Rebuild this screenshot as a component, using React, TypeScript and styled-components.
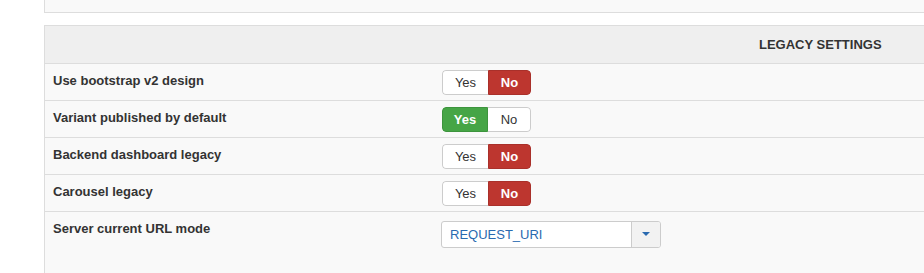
import React from 'react'
import styled, { createGlobalStyle } from 'styled-components'

const GlobalStyle = createGlobalStyle`
  html, body {
    margin: 0;
    padding: 0;
    background: #ffffff;
    overflow: hidden;
  }
  body {
    font-family: "Liberation Sans", Arial, sans-serif;
    font-size: 13px;
    color: #333333;
  }
`

const Page = styled.div`
  padding-left: 44px;
`

const TopPanel = styled.div`
  height: 13px;
  box-sizing: border-box;
  background: #f9f9f9;
  border-left: 1px solid #dddddd;
  border-bottom: 1px solid #dddddd;
`

const Panel = styled.div`
  margin-top: 12px;
  background: #f9f9f9;
  border: 1px solid #dddddd;
  border-right: none;
  min-height: 248px;
`

const PanelHeader = styled.div`
  height: 37px;
  background: #efefef;
  border-bottom: 1px solid #dddddd;
  display: flex;
  align-items: center;
  padding-left: 714px;
  font-weight: bold;
  text-transform: uppercase;
  color: #333333;
`

const Row = styled.div<{ $last?: boolean }>`
  display: flex;
  align-items: ${p => (p.$last ? 'flex-start' : 'center')};
  height: ${p => (p.$last ? 'auto' : '36px')};
  padding-top: ${p => (p.$last ? '8px' : '0')};
  border-bottom: ${p => (p.$last ? 'none' : '1px solid #dddddd')};
`

const Label = styled.div<{ $last?: boolean }>`
  width: 389px;
  padding-left: 8px;
  font-weight: bold;
  color: #333333;
  padding-top: ${p => (p.$last ? '4px' : '0')};
  margin-top: -3px;
`

const Toggle = styled.div`
  display: flex;
  height: 25px;
  border-radius: 4px;
  overflow: hidden;
  margin-top: 1px;
`

const ToggleButton = styled.div<{ $tone: 'off' | 'red' | 'green'; $side: 'left' | 'right' }>`
  display: flex;
  align-items: center;
  justify-content: center;
  box-sizing: border-box;
  width: ${p => (p.$side === 'left' ? '46px' : '43px')};
  font-size: 13px;
  background: ${p => (p.$tone === 'red' ? '#bd362f' : p.$tone === 'green' ? '#46a546' : '#ffffff')};
  color: ${p => (p.$tone === 'off' ? '#333333' : '#ffffff')};
  font-weight: ${p => (p.$tone === 'off' ? 'normal' : 'bold')};
  border: 1px solid ${p => (p.$tone === 'red' ? '#a9302a' : p.$tone === 'green' ? '#3d943d' : '#cccccc')};
  border-radius: ${p => (p.$side === 'left' ? '4px 0 0 4px' : '0 4px 4px 0')};
  border-left-width: ${p => (p.$side === 'right' && p.$tone === 'off' ? '0' : '1px')};
  border-right-width: ${p => (p.$side === 'left' && p.$tone === 'off' ? '0' : '1px')};
`

const Select = styled.div`
  display: flex;
  width: 220px;
  height: 27px;
  box-sizing: border-box;
  margin-left: -1px;
  margin-top: 1px;
  border: 1px solid #cccccc;
  border-radius: 3px;
  background: #ffffff;
  overflow: hidden;
`

const SelectValue = styled.div`
  flex: 1;
  display: flex;
  align-items: center;
  padding-left: 8px;
  color: #2a6ab0;
  font-size: 13px;
`

const SelectCaret = styled.div`
  width: 28px;
  display: flex;
  align-items: center;
  justify-content: center;
  background: #f2f2f2;
  border-left: 1px solid #cccccc;
`

type YesNo = { label: string; value: boolean }

const rows: YesNo[] = [
  { label: 'Use bootstrap v2 design', value: false },
  { label: 'Variant published by default', value: true },
  { label: 'Backend dashboard legacy', value: false },
  { label: 'Carousel legacy', value: false },
]

const App = () => (
  <Page>
    <GlobalStyle />
    <TopPanel />
    <Panel>
      <PanelHeader>Legacy settings</PanelHeader>
      {rows.map(r => (
        <Row key={r.label}>
          <Label>{r.label}</Label>
          <Toggle>
            <ToggleButton $side="left" $tone={r.value ? 'green' : 'off'}>Yes</ToggleButton>
            <ToggleButton $side="right" $tone={r.value ? 'off' : 'red'}>No</ToggleButton>
          </Toggle>
        </Row>
      ))}
      <Row $last>
        <Label $last>Server current URL mode</Label>
        <Select>
          <SelectValue>REQUEST_URI</SelectValue>
          <SelectCaret>
            <svg width="8" height="5" viewBox="0 0 8 5">
              <path d="M0 0 L8 0 L4 4 Z" fill="#2a6ab0" />
            </svg>
          </SelectCaret>
        </Select>
      </Row>
    </Panel>
  </Page>
)

export default App
